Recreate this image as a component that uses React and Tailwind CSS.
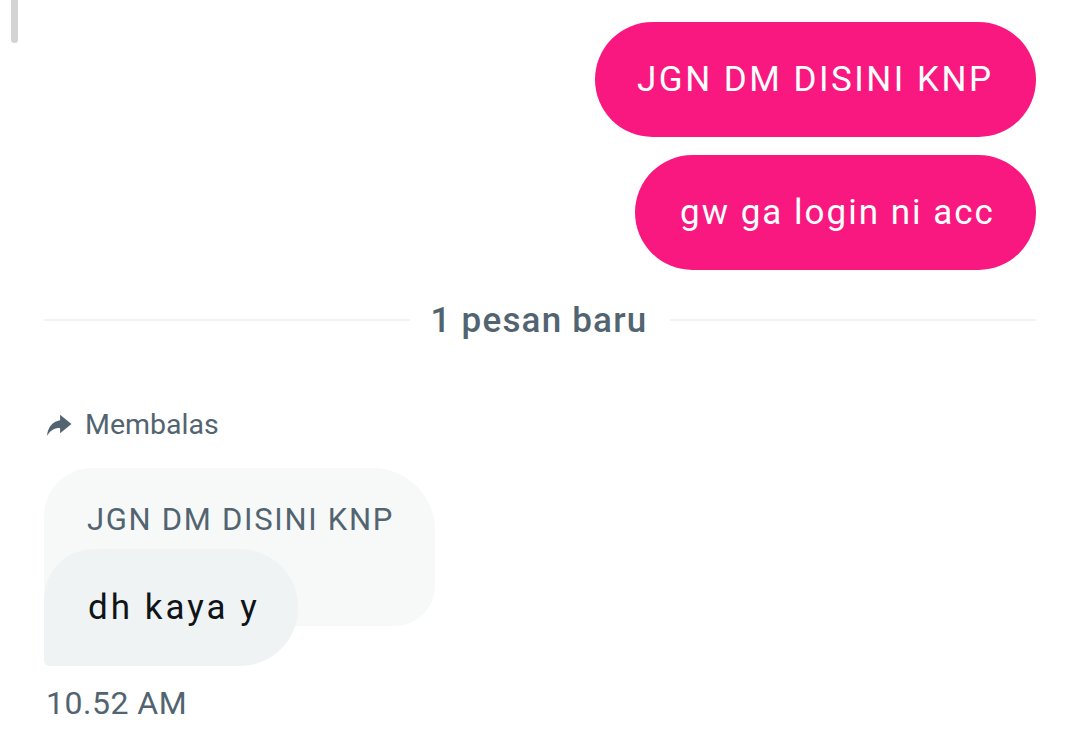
import React from "react";

function ReplyIcon() {
  return (
    <svg viewBox="0 0 24 24" className="w-[26px] h-[26px]" fill="#536471">
      <path d="M13 2.5 L23.5 11 L13 19.5 V14.8 C7.8 14.6 4.2 16.8 1 22 C1.6 14.2 6 8.6 13 7.6 Z" />
    </svg>
  );
}

export default function App() {
  return (
    <div
      className="relative w-[1080px] h-[744px] bg-white overflow-hidden"
      style={{ fontFamily: "Roboto, 'Noto Sans', sans-serif" }}
    >
      <div className="absolute left-[11px] top-0 w-[7px] h-[43px] rounded-b-full bg-[#d3d3d3]" />
      <div className="flex flex-col px-[44px] pt-[22px]">
        <div className="flex flex-col items-end gap-[18px]">
          <div className="w-[441px] h-[115px] flex items-center rounded-full bg-[#F91880] pl-[42px] text-white text-[35px] tracking-[2.5px] leading-none whitespace-nowrap">
            JGN DM DISINI KNP
          </div>
          <div className="w-[401px] h-[115px] flex items-center rounded-full bg-[#F91880] pl-[45px] text-white text-[35px] tracking-[2px] leading-none whitespace-nowrap">
            gw ga login ni acc
          </div>
        </div>

        <div className="mt-[30px] h-[40px] flex items-center">
          <div className="flex-1 h-[2px] bg-[#EFF3F4]" />
          <div className="pl-[21px] pr-[23px] text-[35px] tracking-[1.2px] font-medium text-[#536471] leading-none whitespace-nowrap">
            1 pesan baru
          </div>
          <div className="flex-1 h-[2px] bg-[#EFF3F4]" />
        </div>

        <div className="mt-[70px] flex items-center gap-[13px] pl-[2px] h-[30px]">
          <ReplyIcon />
          <span className="text-[28.5px] text-[#536471] leading-none">Membalas</span>
        </div>

        <div className="mt-[28px] flex flex-col items-start">
          <div className="w-[391px] h-[158px] rounded-tl-[48px] rounded-tr-[62px] rounded-br-[40px] rounded-bl-[40px] bg-[#F7F9F9] pl-[43px] pt-[36px]">
            <span className="text-[31px] tracking-[1.7px] text-[#536471] leading-none whitespace-nowrap">JGN DM DISINI KNP</span>
          </div>
          <div className="-mt-[77px] w-[254px] h-[117px] flex items-center rounded-tl-[50px] rounded-tr-[58px] rounded-br-[58px] rounded-bl-[6px] bg-[#EFF3F4] pl-[44px] text-[35px] tracking-[3px] text-[#0F1419] leading-none whitespace-nowrap">
            dh kaya y
          </div>
        </div>

        <div className="mt-[21px] pl-[2px] text-[32px] tracking-[0.5px] text-[#536471] leading-none">10.52 AM</div>
      </div>
    </div>
  );
}
